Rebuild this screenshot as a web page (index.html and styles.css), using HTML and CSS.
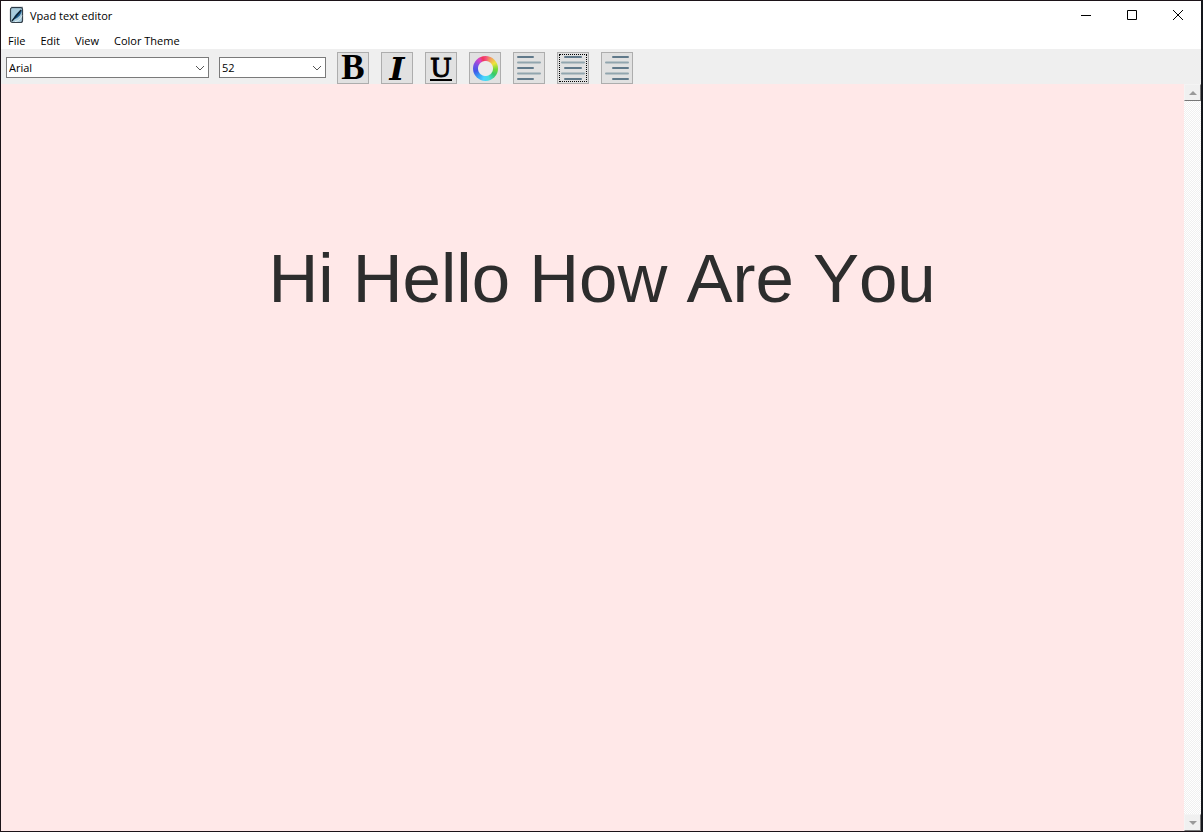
FILE: index.html
```html
<!DOCTYPE html>
<html lang="en">
<head>
<meta charset="utf-8">
<title>Vpad text editor</title>
<link rel="stylesheet" href="styles.css">
</head>
<body>
<div class="window">
  <header class="titlebar">
    <svg class="app-icon" viewBox="0 0 16 18" aria-hidden="true">
      <rect x="1.5" y="1.5" width="12" height="15" rx="2" fill="#a9cbdc" stroke="#36424c" stroke-width="1.2"/>
      <path d="M2.5 1.5h11" stroke="#203040" stroke-width="1.4" stroke-dasharray="1 1"/>
      <path d="M4 14C5 10 8 6 13 4c-1 5-3 7-7 9z" fill="#195a8c"/>
      <path d="M3 15C6 11 9 8 12 4" fill="none" stroke="#10202e" stroke-width="1.3"/>
      <path d="M6 15.5c3 0 6-3 7-6" fill="none" stroke="#e4f1f6" stroke-width="1"/>
    </svg>
    <h1 class="title">Vpad text editor</h1>
    <div class="window-controls">
      <button class="window-button" aria-label="Minimize"><svg class="control-icon" viewBox="0 0 12 12"><path d="M1 6.5h10"/></svg></button>
      <button class="window-button" aria-label="Maximize"><svg class="control-icon" viewBox="0 0 12 12"><path d="M1.500 1.500h9v9h-9z"/></svg></button>
      <button class="window-button" aria-label="Close"><svg class="control-icon" viewBox="0 0 12 12"><path d="M1 1l10 10M11 1L1 11"/></svg></button>
    </div>
  </header>
  <nav class="menubar">
    <button class="menu">File</button>
    <button class="menu">Edit</button>
    <button class="menu">View</button>
    <button class="menu">Color Theme</button>
  </nav>
  <div class="toolbar">
    <div class="combo combo-font">
      <select class="select" aria-label="Font family"><option>Arial</option></select>
      <svg class="chevron" viewBox="0 0 10 6" aria-hidden="true"><path d="M1 1l4 4 4-4"/></svg>
    </div>
    <div class="combo combo-size">
      <select class="select" aria-label="Font size"><option>52</option></select>
      <svg class="chevron" viewBox="0 0 10 6" aria-hidden="true"><path d="M1 1l4 4 4-4"/></svg>
    </div>
    <div class="tools">
      <button class="tool tool-bold" aria-label="Bold">B</button>
      <button class="tool tool-italic" aria-label="Italic">I</button>
      <button class="tool tool-underline" aria-label="Underline"><span class="underlined">U</span></button>
      <button class="tool" aria-label="Text color"><span class="wheel"></span></button>
      <button class="tool" aria-label="Align left">
        <svg class="align-icon" viewBox="0 0 28 28"><path class="dark" d="M3 3h15M3 14h15M3 25h15"/><path class="light" d="M3 8.500h22M3 19.500h22"/></svg>
      </button>
      <button class="tool tool-focused" aria-label="Align center">
        <svg class="align-icon" viewBox="0 0 28 28"><path class="dark" d="M6 3h16M6 14h16M6 25h16"/><path class="light" d="M3 8.500h22M3 19.500h22"/></svg>
      </button>
      <button class="tool" aria-label="Align right">
        <svg class="align-icon" viewBox="0 0 28 28"><path class="dark" d="M10 3h15M10 14h15M10 25h15"/><path class="light" d="M3 8.500h22M3 19.500h22"/></svg>
      </button>
    </div>
  </div>
  <main class="workspace">
    <textarea class="editor" aria-label="Document" spellcheck="false">


 Hi Hello How Are You</textarea>
    <div class="scrollbar">
      <button class="scroll-button" aria-label="Scroll up"><svg class="scroll-arrow" viewBox="0 0 8 4"><path d="M0 4l4-4 4 4z"/></svg></button>
      <button class="scroll-button" aria-label="Scroll down"><svg class="scroll-arrow" viewBox="0 0 8 4"><path d="M0 0l4 4 4-4z"/></svg></button>
    </div>
  </main>
</div>
</body>
</html>
```
FILE: styles.css
```css
* {
  box-sizing: border-box;
}

body {
  margin: 0;
  font-family: "Open Sans", "Noto Sans", sans-serif;
  font-size: 11px;
  color: #000;
}

button,
select {
  margin: 0;
  padding: 0;
  border: 0;
  background: none;
  font: inherit;
  color: inherit;
}

.window {
  display: flex;
  flex-direction: column;
  height: 100vh;
  border: 1px solid #1c1318;
  border-right: 2px solid #14171c;
  background: #fff;
}

.titlebar {
  display: flex;
  align-items: center;
  height: 28px;
  padding-left: 8px;
}

.app-icon {
  width: 16px;
  height: 18px;
  margin-right: 5px;
}

.title {
  margin: 0;
  font-size: 11px;
  font-weight: 400;
}

.window-controls {
  display: flex;
  align-self: stretch;
  margin-left: auto;
}

.window-button {
  display: flex;
  align-items: center;
  justify-content: center;
  width: 46px;
}

.control-icon {
  width: 12px;
  height: 12px;
  fill: none;
  stroke: #000;
}

.menubar {
  display: flex;
  height: 20px;
  gap: 15px;
  padding-left: 7px;
}

.menu {
  line-height: 20px;
  padding-top: 2px;
}

.toolbar {
  display: flex;
  align-items: center;
  height: 35px;
  gap: 10px;
  padding-left: 5px;
  background: #efefef;
}

.combo {
  position: relative;
  height: 21px;
  margin-top: 2px;
}

.combo-font {
  width: 203px;
}

.combo-size {
  width: 107px;
}

.select {
  width: 100%;
  height: 21px;
  padding: 0 20px 0 2px;
  border: 1px solid #7a7a7a;
  border-radius: 0;
  background: #fff;
  appearance: none;
}

.chevron {
  position: absolute;
  top: 8px;
  right: 4px;
  width: 10px;
  height: 6px;
  fill: none;
  stroke: #555;
  pointer-events: none;
}

.tools {
  display: flex;
  align-self: flex-end;
  gap: 12px;
  padding-left: 1px;
}

.tool {
  display: flex;
  align-items: center;
  justify-content: center;
  width: 32px;
  height: 32px;
  border: 1px solid #adadad;
  background: #e1e1e1;
  line-height: 30px;
}

.tool-bold {
  font-family: "Liberation Serif", serif;
  font-size: 35px;
  font-weight: 700;
}

.tool-italic {
  padding-top: 2px;
  font-family: "DejaVu Serif", serif;
  font-size: 32px;
  font-style: italic;
  font-weight: 700;
  line-height: 28px;
}

.tool-underline {
  font-family: "DejaVu Serif", serif;
  font-size: 26px;
  -webkit-text-stroke: 1px #000;
}

.underlined {
  height: 25px;
  border-bottom: 2px solid #000;
  line-height: 24px;
}

.tool-focused {
  outline: 1px dotted #000;
  outline-offset: -3px;
}

.wheel {
  width: 25px;
  height: 25px;
  border-radius: 50%;
  background:
    radial-gradient(circle, #ececec 7px, transparent 8px),
    conic-gradient(#f24a7c, #f3a35c 30deg, #eee43c 60deg, #70d938 95deg, #35c96b 125deg, #46dddd 160deg, #4bd5ff 190deg, #37a5f4 220deg, #4058e8 255deg, #7852e5 290deg, #d743c5 325deg, #f33655 345deg, #f24a7c);
}

.align-icon {
  width: 28px;
  height: 28px;
  fill: none;
  stroke-width: 2;
  stroke-linecap: round;
}

.dark {
  stroke: #60798a;
}

.light {
  stroke: #91a5ae;
}

.workspace {
  display: flex;
  flex: 1;
  min-height: 0;
}

.editor {
  flex: 1;
  min-width: 0;
  padding: 0;
  border: 0;
  outline: 0;
  resize: none;
  overflow: hidden;
  background: #ffe8e8;
  color: #2d2d2d;
  font-family: "Liberation Sans", Arial, sans-serif;
  font-size: 69px;
  font-kerning: none;
  line-height: 78px;
  text-align: center;
}

.scrollbar {
  display: flex;
  flex-direction: column;
  justify-content: space-between;
  width: 17px;
  background: repeating-conic-gradient(#f0f0f0 0 25%, #fff 0 50%) 0 0 / 2px 2px;
}

.scroll-button {
  display: flex;
  align-items: center;
  justify-content: center;
  height: 17px;
  border: 1px solid #f4f4f4;
  border-right-color: #777;
  border-bottom-color: #777;
  background: #f0f0f0;
}

.scroll-arrow {
  width: 8px;
  height: 4px;
  fill: #999;
}
```
